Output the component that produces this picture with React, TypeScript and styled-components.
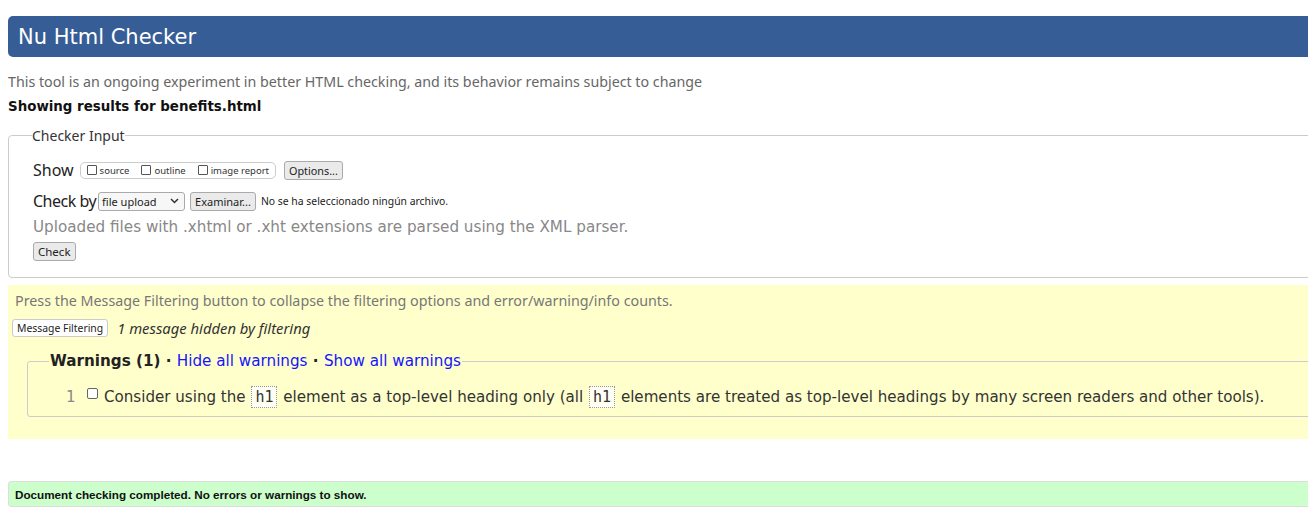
import React from "react";
import styled, { createGlobalStyle } from "styled-components";

const Global = createGlobalStyle`
  html, body { margin: 0; padding: 0; background: #fff; overflow: hidden; }
  body { font-family: "Noto Sans", sans-serif; color: #222; }
`;

const Page = styled.div`
  width: 1340px;
  padding: 16px 0 0 8px;
  display: flex;
  flex-direction: column;
`;

const TitleBar = styled.h1`
  margin: 0;
  height: 41px;
  display: flex;
  align-items: center;
  padding-left: 10px;
  background: #365d95;
  border-radius: 5px;
  color: #fff;
  font-family: "DejaVu Sans", sans-serif;
  font-weight: normal;
  font-size: 21px;
`;

const Intro = styled.p`
  margin: 16px 0 0;
  font-size: 14.25px;
  line-height: 18px;
  color: #666;
`;

const Showing = styled.h2`
  margin: 7px 0 0;
  font-family: "DejaVu Sans", sans-serif;
  font-size: 13.4px;
  line-height: 18px;
  font-weight: bold;
  color: #111;
`;

const InputBox = styled.fieldset`
  margin: 10px 0 0;
  padding: 7px 0 16px 24px;
  border: 1px solid #ccc;
  border-radius: 4px;
  display: flex;
  flex-direction: column;
  align-items: flex-start;
`;

const InputLegend = styled.legend`
  padding: 0;
  margin-left: -1px;
  font-size: 14px;
  color: #333;
`;

type RowProps = { $gap?: number; $top?: number };

const Row = styled.div<RowProps>`
  display: flex;
  align-items: center;
  gap: ${(p) => p.$gap ?? 5}px;
  margin-top: ${(p) => p.$top ?? 0}px;
`;

const RowLabel = styled.span<{ $tight?: boolean }>`
  font-size: 16px;
  color: #222;
  line-height: 20px;
  letter-spacing: ${(p) => (p.$tight ? "-0.5px" : "0")};
`;

const OptGroup = styled.span`
  display: inline-flex;
  align-items: center;
  gap: 12px;
  height: 15px;
  padding: 0 6px;
  border: 1px solid #ccc;
  border-radius: 5px;
  margin-left: 1px;
`;

const OptItem = styled.label`
  display: inline-flex;
  align-items: center;
  gap: 3px;
  font-size: 9.5px;
  color: #333;
`;

const Box = styled.span`
  width: 10px;
  height: 10px;
  border: 1px solid #555;
  border-radius: 1px;
  background: #fff;
  box-sizing: border-box;
`;

type BtnProps = { $h?: number; $fs?: number; $light?: boolean };

const Button = styled.span<BtnProps>`
  display: inline-flex;
  align-items: center;
  height: ${(p) => p.$h ?? 19}px;
  padding: 0 4px;
  box-sizing: border-box;
  border: 1px solid ${(p) => (p.$light ? "#ccc" : "#aaa")};
  border-radius: 3px;
  background: ${(p) => (p.$light ? "#fff" : "#eaeaea")};
  font-size: ${(p) => p.$fs ?? 12}px;
  color: #222;
  white-space: nowrap;
`;

const Select = styled.span`
  display: inline-flex;
  align-items: center;
  justify-content: space-between;
  width: 87px;
  height: 19px;
  box-sizing: border-box;
  padding: 0 5px 0 3px;
  border: 1px solid #aaa;
  border-radius: 3px;
  background: #f7f7f7;
  font-size: 11px;
  color: #222;
`;

const FileNote = styled.span`
  font-size: 10.4px;
  color: #222;
`;

const Hint = styled.p`
  margin: 6px 0 0;
  font-family: "DejaVu Sans", sans-serif;
  font-size: 15.2px;
  line-height: 20px;
  color: #888;
`;

const Filters = styled.section`
  margin-top: 7px;
  background: #ffffcc;
  padding: 7px 0 22px 4px;
  display: flex;
  flex-direction: column;
  align-items: flex-start;
`;

const FilterHint = styled.p`
  margin: 0 0 0 3px;
  font-size: 14.3px;
  line-height: 18px;
  color: #777;
`;

const Hidden = styled.em`
  font-size: 14.8px;
  color: #333;
`;

const WarnBox = styled.fieldset`
  align-self: stretch;
  margin: 14px 0 0 15px;
  padding: 16px 0 8px 38px;
  border: 1px solid #ccc;
  border-radius: 3px;
  min-width: 0;
`;

const WarnLegend = styled.legend`
  margin-left: -17px;
  padding: 0 1px;
  font-family: "DejaVu Sans", sans-serif;
  font-size: 15.2px;
  font-weight: bold;
  color: #222;
`;

const LegendLink = styled.a`
  font-weight: normal;
  color: #1515ff;
  text-decoration: none;
`;

const Msg = styled.div`
  display: flex;
  align-items: flex-start;
  font-family: "DejaVu Sans", sans-serif;
  font-size: 15.1px;
  line-height: 22px;
  color: #333;
`;

const Num = styled.span`
  color: #888;
  width: 21px;
`;

const MsgBox = styled.span`
  flex: none;
  width: 11px;
  height: 11px;
  margin-top: 2px;
  margin-right: 6px;
  border: 1px solid #666;
  border-radius: 2px;
  background: #fff;
  box-sizing: border-box;
`;

const Code = styled.code`
  font-family: "DejaVu Sans Mono", monospace;
  font-size: 15px;
  border: 1px dotted #999;
  background: #fffff4;
  padding: 1px 3px;
  margin: 0 1px;
`;

const Done = styled.p`
  margin: 42px 0 0;
  height: 24px;
  display: flex;
  align-items: center;
  padding-left: 6px;
  background: #ccffcc;
  border: 1px solid #ddd;
  border-radius: 3px;
  font-family: "Liberation Sans", Arial, sans-serif;
  font-weight: bold;
  font-size: 11.7px;
  color: #111;
`;

const Chevron = () => (
  <svg width="9" height="6" viewBox="0 0 9 6">
    <path d="M1 1l3.5 3.5L8 1" stroke="#333" strokeWidth="1.5" fill="none" />
  </svg>
);

export default function App() {
  return (
    <>
      <Global />
      <Page>
        <TitleBar>Nu Html Checker</TitleBar>
        <Intro>This tool is an ongoing experiment in better HTML checking, and its behavior remains subject to change</Intro>
        <Showing>Showing results for benefits.html</Showing>
        <InputBox>
          <InputLegend>Checker Input</InputLegend>
          <Row $top={8} $gap={5}>
            <RowLabel>Show</RowLabel>
            <OptGroup>
              <OptItem><Box />source</OptItem>
              <OptItem><Box />outline</OptItem>
              <OptItem><Box />image report</OptItem>
            </OptGroup>
            <Button $fs={10.8} style={{ marginLeft: 3 }}>Options...</Button>
          </Row>
          <Row $top={11} $gap={2}>
            <RowLabel $tight>Check by</RowLabel>
            <Select>file upload<Chevron /></Select>
            <Button $fs={11} style={{ marginLeft: 3 }}>Examinar...</Button>
            <FileNote style={{ marginLeft: 3 }}>No se ha seleccionado ningún archivo.</FileNote>
          </Row>
          <Hint>Uploaded files with .xhtml or .xht extensions are parsed using the XML parser.</Hint>
          <Row $top={5}>
            <Button $fs={11.5}>Check</Button>
          </Row>
        </InputBox>
        <Filters>
          <FilterHint>Press the Message Filtering button to collapse the filtering options and error/warning/info counts.</FilterHint>
          <Row $top={8} $gap={9}>
            <Button $h={18} $fs={10.4} $light>Message Filtering</Button>
            <Hidden>1 message hidden by filtering</Hidden>
          </Row>
          <WarnBox>
            <WarnLegend>
              Warnings (1) · <LegendLink href="#">Hide all warnings</LegendLink> · <LegendLink href="#">Show all warnings</LegendLink>
            </WarnLegend>
            <Msg>
              <Num>1</Num>
              <MsgBox />
              <span>
                Consider using the <Code>h1</Code> element as a top-level heading only (all <Code>h1</Code> elements are treated as top-level headings by many screen readers and other tools).
              </span>
            </Msg>
          </WarnBox>
        </Filters>
        <Done>Document checking completed. No errors or warnings to show.</Done>
      </Page>
    </>
  );
}
